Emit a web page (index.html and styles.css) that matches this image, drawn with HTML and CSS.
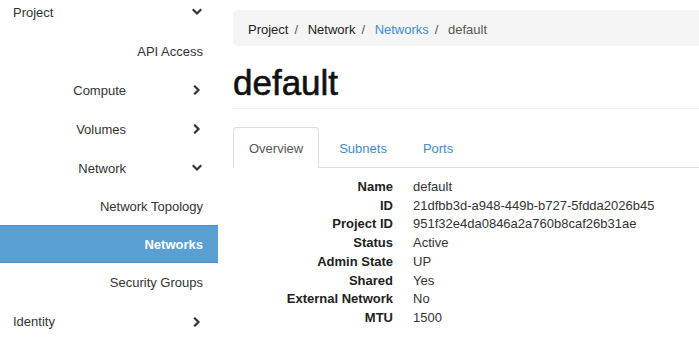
FILE: index.html
```html
<!DOCTYPE html>
<html lang="en">
<head>
    <meta charset="UTF-8">
    <meta name="viewport" content="width=device-width, initial-scale=1.0">
    <title>default - Network Details</title>
    <link rel="stylesheet" href="styles.css">
</head>
<body>
<div class="page">
    <nav class="sidebar">
        <div class="nav-row nav-top">
            <span>Project</span>
            <svg class="chev" viewBox="0 0 10 10"><path d="M1.5 3 L5 6.5 L8.5 3"/></svg>
        </div>
        <div class="nav-row nav-item">API Access</div>
        <div class="nav-row nav-group">
            <span class="label">Compute</span>
            <svg class="chev" viewBox="0 0 10 10"><path d="M3 1.5 L6.5 5 L3 8.5"/></svg>
        </div>
        <div class="nav-row nav-group">
            <span class="label">Volumes</span>
            <svg class="chev" viewBox="0 0 10 10"><path d="M3 1.5 L6.5 5 L3 8.5"/></svg>
        </div>
        <div class="nav-row nav-group">
            <span class="label">Network</span>
            <svg class="chev" viewBox="0 0 10 10"><path d="M1.5 3 L5 6.5 L8.5 3"/></svg>
        </div>
        <div class="nav-row nav-item nav-first">Network Topology</div>
        <div class="nav-row nav-item active">Networks</div>
        <div class="nav-row nav-item">Security Groups</div>
        <div class="nav-row nav-top">
            <span>Identity</span>
            <svg class="chev" viewBox="0 0 10 10"><path d="M3 1.5 L6.5 5 L3 8.5"/></svg>
        </div>
    </nav>

    <main class="content">
        <ol class="breadcrumb">
            <li>Project</li>
            <li>Network</li>
            <li><a href="#">Networks</a></li>
            <li class="current">default</li>
        </ol>

        <div class="page-header">
            <h1>default</h1>
        </div>

        <ul class="nav-tabs">
            <li class="active"><a href="#">Overview</a></li>
            <li><a href="#">Subnets</a></li>
            <li><a href="#">Ports</a></li>
        </ul>

        <dl class="details">
            <dt>Name</dt><dd>default</dd>
            <dt>ID</dt><dd>21dfbb3d-a948-449b-b727-5fdda2026b45</dd>
            <dt>Project ID</dt><dd>951f32e4da0846a2a760b8caf26b31ae</dd>
            <dt>Status</dt><dd>Active</dd>
            <dt>Admin State</dt><dd>UP</dd>
            <dt>Shared</dt><dd>Yes</dd>
            <dt>External Network</dt><dd>No</dd>
            <dt>MTU</dt><dd>1500</dd>
        </dl>
    </main>
</div>
</body>
</html>
```

FILE: styles.css
```css
body {
    margin: 0;
    font-family: 'Liberation Sans', Arial, sans-serif;
    font-size: 13px;
    line-height: 19px;
    color: #333333;
    background: #ffffff;
    overflow: hidden;
}
a {
    color: #428bca;
    text-decoration: none;
}
.page {
    display: grid;
    grid-template-columns: 218px 1fr;
    margin-right: -20px;
}
.sidebar {
    margin-top: -7.5px;
}
.nav-row {
    display: flex;
    align-items: center;
    padding: 10px 16px 10px 13px;
    color: #333333;
}
.nav-top {
    justify-content: space-between;
}
.nav-item {
    justify-content: flex-end;
    padding-right: 15px;
}
.nav-first {
    padding-top: 9px;
    padding-bottom: 9.5px;
}
.nav-group .label {
    flex: 1;
    text-align: right;
    margin-right: 66px;
}
.nav-row.active {
    background: #599fd2;
    color: #ffffff;
    font-weight: bold;
    border-top: 1px solid #4b8fc5;
    border-bottom: 1px solid #4b8fc5;
    padding-top: 9px;
    padding-bottom: 8px;
}
.chev {
    width: 10px;
    height: 10px;
    fill: none;
    stroke: #333333;
    stroke-width: 2.2;
    stroke-linecap: square;
}
.content {
    padding-left: 15px;
}
.breadcrumb {
    display: flex;
    list-style: none;
    margin: 10px 0 0;
    padding: 10px 15px 7px;
    background: #f5f5f5;
    border-radius: 4px;
    color: #222222;
}
.breadcrumb li + li:before {
    content: "/\00a0";
    padding: 0 6px;
    color: #555555;
}
.breadcrumb .current {
    color: #555555;
}
.page-header {
    border-bottom: 1px solid #eeeeee;
    margin-top: 16px;
    padding-bottom: 4px;
}
.page-header h1 {
    margin: 0;
    font-size: 35px;
    line-height: 42px;
    font-weight: normal;
    color: #111111;
    -webkit-text-stroke: 0.6px #111111;
}
.nav-tabs {
    display: flex;
    list-style: none;
    margin: 18px 0 0;
    padding: 0;
    border-bottom: 1px solid #dddddd;
}
.nav-tabs li {
    margin-right: 4px;
    margin-bottom: -1px;
}
.nav-tabs a {
    display: block;
    padding: 10.5px 15px 9.5px;
    border: 1px solid transparent;
    border-radius: 4px 4px 0 0;
}
.nav-tabs .active a {
    color: #555555;
    background: #ffffff;
    border-color: #dddddd #dddddd transparent;
}
.details {
    display: grid;
    grid-template-columns: 160px 1fr;
    column-gap: 20px;
    margin: 10px 0 0;
    line-height: 18.7px;
}
.details dt {
    font-weight: bold;
    text-align: right;
    color: #222222;
}
.details dd {
    margin: 0;
    color: #333333;
}
```
